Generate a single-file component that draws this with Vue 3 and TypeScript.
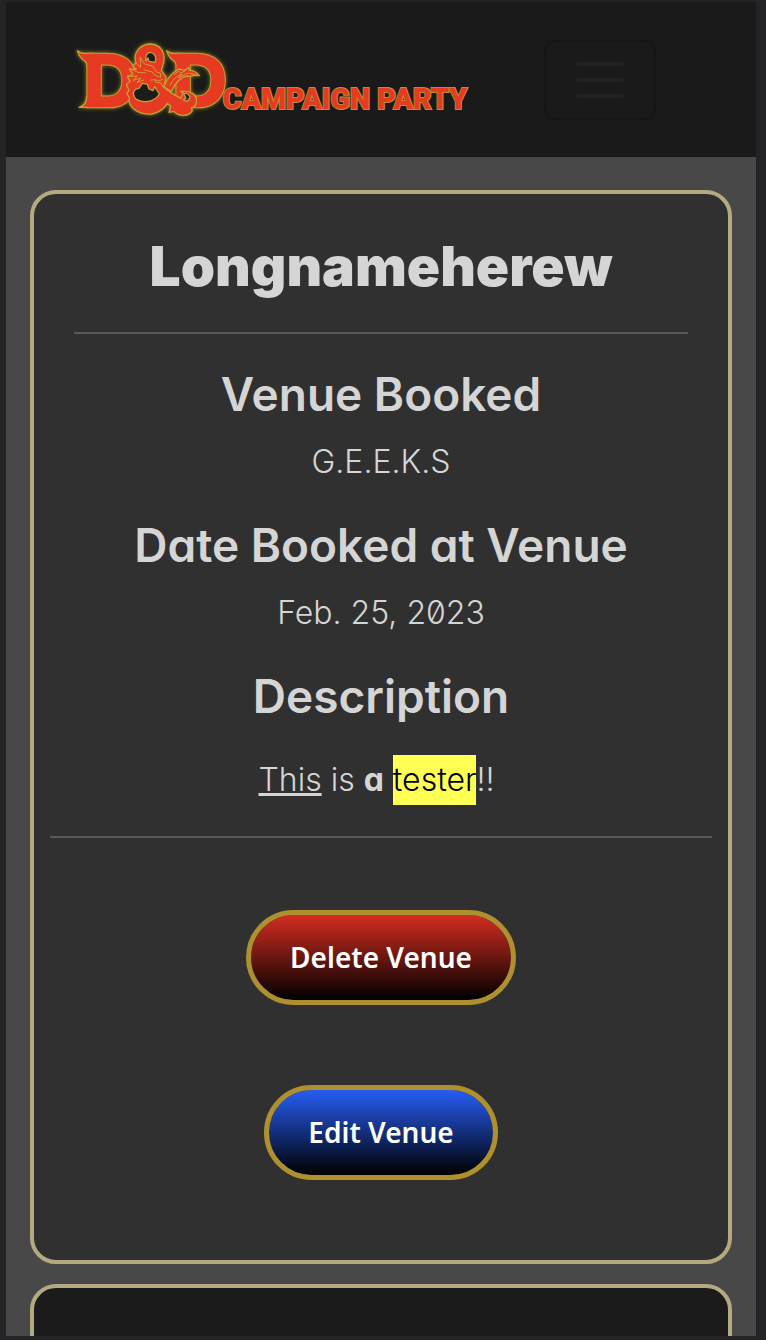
<script setup lang="ts">
interface Detail {
  label: string
  value: string
}

const title = 'Longnameherew'
const details: Detail[] = [
  { label: 'Venue Booked', value: 'G.E.E.K.S' },
  { label: 'Date Booked at Venue', value: 'Feb. 25, 2023' },
]
</script>

<template>
  <div class="page">
    <div class="frame">
      <nav class="navbar">
        <a class="brand" href="#" aria-label="D&amp;D Campaign Party">
          <svg class="logo" viewBox="0 0 1260 300">
            <g class="emblem">
              <g class="letters outline" aria-hidden="true">
                <text x="71" y="228">D</text>
                <text x="338" y="228">D</text>
              </g>
              <path class="shape" d="M52 62Q62 71 80 70H100V112H82Q82 97 70 90Q57 80 52 62ZM320 62Q330 71 348 70H368V112H350Q350 97 338 90Q325 80 320 62ZM57 232Q80 226 80 200H105V232Z" />
              <g class="letters">
                <text x="71" y="228">D</text>
                <text x="338" y="228">D</text>
              </g>
              <path
                class="shape"
                d="M228 99Q220 76 235 58Q250 42 271 42Q296 43 307 62Q317 84 308 108L304 122L318 141L311 172L337 191L362 205L370 188L362 184Q383 181 397 190Q411 198 409 217Q408 230 394 234L397 242Q389 256 370 256Q352 256 342 244L327 247L332 228L322 220Q307 245 275 252Q241 255 219 235Q204 219 208 202L200 190L207 181L199 164L210 154L202 139L219 133L208 117L229 118L218 108Z"
              />
              <path class="hole" d="M257 93L264 84L267 94L285 97Q290 84 283 74Q278 67 270 67Q256 69 257 93ZM237 175L226 178Q213 193 229 208Q250 220 274 212Q291 205 298 192L284 170L279 182L267 177L262 163L247 160Z" />
              <path class="shape" d="M311 170Q326 134 356 117L374 121L386 112L388 121Q407 121 418 137Q400 134 391 139L381 138Q352 143 334 185L320 176Z" />
              <path class="hole" d="M371 191Q383 188 389 198Q391 210 379 214L370 209L378 205Z" />
              <path
                class="lines"
                d="M228 99L242 112L240 81L252 101L279 109L289 126L301 129L302 142L286 136L274 125L251 119M213 118L237 128L257 128M205 140L232 138L219 151L243 144L231 158L252 150M271 151L282 148L296 153L309 147M282 149L289 158L302 158L308 171M330 167Q344 137 367 132L354 144L384 129L410 134M342 133L356 124L363 129L378 121"
              />
            </g>
            <text class="wordmark" x="488" y="236">CAMPAIGN PARTY</text>
          </svg>
        </a>
        <button class="toggler" type="button" aria-label="Toggle navigation">
          <span class="bar"></span>
          <span class="bar"></span>
          <span class="bar"></span>
        </button>
      </nav>

      <main class="content">
        <article class="card">
          <h1 class="title">{{ title }}</h1>
          <section v-for="d in details" :key="d.label" class="detail">
            <h2>{{ d.label }}</h2>
            <p>{{ d.value }}</p>
          </section>
          <section class="detail description">
            <h2>Description</h2>
            <p><u>This</u> is <strong>a</strong> <mark>tester</mark>!!&nbsp;</p>
          </section>
          <div class="actions">
            <button class="action delete" type="button">Delete Venue</button>
            <button class="action edit" type="button">Edit Venue</button>
          </div>
        </article>
        <article class="card dark"></article>
      </main>
    </div>
  </div>
</template>

<style>
body {
  background: #242426;
}
</style>

<style scoped>
.page {
  box-sizing: border-box;
  height: 100vh;
  padding: 2px 10px 4px 6px;
  background: #242426;
  color: #d5d5d5;
  font-family: Inter, "Noto Sans", sans-serif;
  font-feature-settings: "cv11", "zero";
}
.frame {
  display: flex;
  flex-direction: column;
  height: 100%;
  overflow: hidden;
  background: #484848;
}
.navbar {
  display: flex;
  flex: none;
  align-items: center;
  justify-content: space-between;
  padding: 28px 100px 27px 54px;
  background: #1a1a1a;
}
.brand {
  display: block;
  flex: 0 1 420px;
}
.logo {
  display: block;
  width: 100%;
  overflow: visible;
}
.emblem {
  filter: drop-shadow(0 0 6px #8f852a);
}
.letters {
  fill: #e63a22;
  stroke: #e63a22;
  stroke-width: 8;
  font-family: "Liberation Sans", Arial, sans-serif;
  font-size: 224px;
  font-weight: 700;
}
.outline {
  stroke: #c4a031;
  stroke-width: 14;
}
.shape {
  fill: #e63a22;
  stroke: #c4a031;
  stroke-width: 4;
  stroke-linejoin: round;
}
.hole {
  fill: #1c1c1a;
  stroke: #c4a031;
  stroke-width: 4;
  stroke-linejoin: round;
}
.lines {
  fill: none;
  stroke: #d39a30;
  stroke-width: 3;
  stroke-linejoin: round;
}
.wordmark {
  fill: #e63a22;
  stroke: #b98f2b;
  stroke-width: 6;
  paint-order: stroke;
  font-family: Roboto, sans-serif;
  font-size: 86px;
  font-weight: 900;
}
.toggler {
  display: flex;
  box-sizing: border-box;
  flex: none;
  flex-direction: column;
  align-items: center;
  justify-content: center;
  gap: 12px;
  width: 112px;
  height: 80px;
  padding: 0;
  border: 2px solid #161616;
  border-radius: 12px;
  background: transparent;
}
.bar {
  width: 48px;
  height: 4px;
  border-radius: 2px;
  background: #222226;
}
.content {
  display: flex;
  flex: 1;
  flex-direction: column;
  gap: 20px;
  padding: 33px 24px 0;
}
.card {
  flex: none;
  padding: 42px 16px 80px;
  border: 4px solid #b4aa80;
  border-radius: 26px;
  background: #303030;
  text-align: center;
}
.dark {
  background: #1b1b1b;
}
.title {
  margin: 0 24px 32px;
  padding-bottom: 36px;
  border-bottom: 2px solid #595959;
  font-feature-settings: normal;
  font-size: 55px;
  font-weight: 900;
  line-height: 60px;
}
.detail {
  margin-bottom: 30px;
}
h2 {
  margin: 0 0 15px;
  font-size: 46px;
  font-weight: 600;
  line-height: 56px;
}
p {
  margin: 0;
  font-size: 32px;
  font-weight: 300;
  line-height: 50px;
}
.description {
  margin: 0;
  padding-bottom: 31px;
  border-bottom: 2px solid #595959;
}
.description h2 {
  margin-bottom: 31px;
}
u {
  text-decoration-thickness: 3px;
}
strong {
  font-weight: 700;
}
mark {
  display: inline-block;
  background: #ffff54;
  color: #000;
}
.actions {
  display: flex;
  flex-direction: column;
  align-items: center;
  gap: 80px;
  padding-top: 72px;
}
.action {
  padding: 22px 39px 23px;
  border: 5px solid #ae902f;
  border-radius: 48px;
  color: #fff;
  font-family: "Noto Sans", "Open Sans", sans-serif;
  font-size: 28px;
  font-weight: 600;
  line-height: 40px;
}
.delete {
  background: linear-gradient(#d42d20, #000) padding-box;
}
.edit {
  background: linear-gradient(#265df5, #000) padding-box;
}
</style>
